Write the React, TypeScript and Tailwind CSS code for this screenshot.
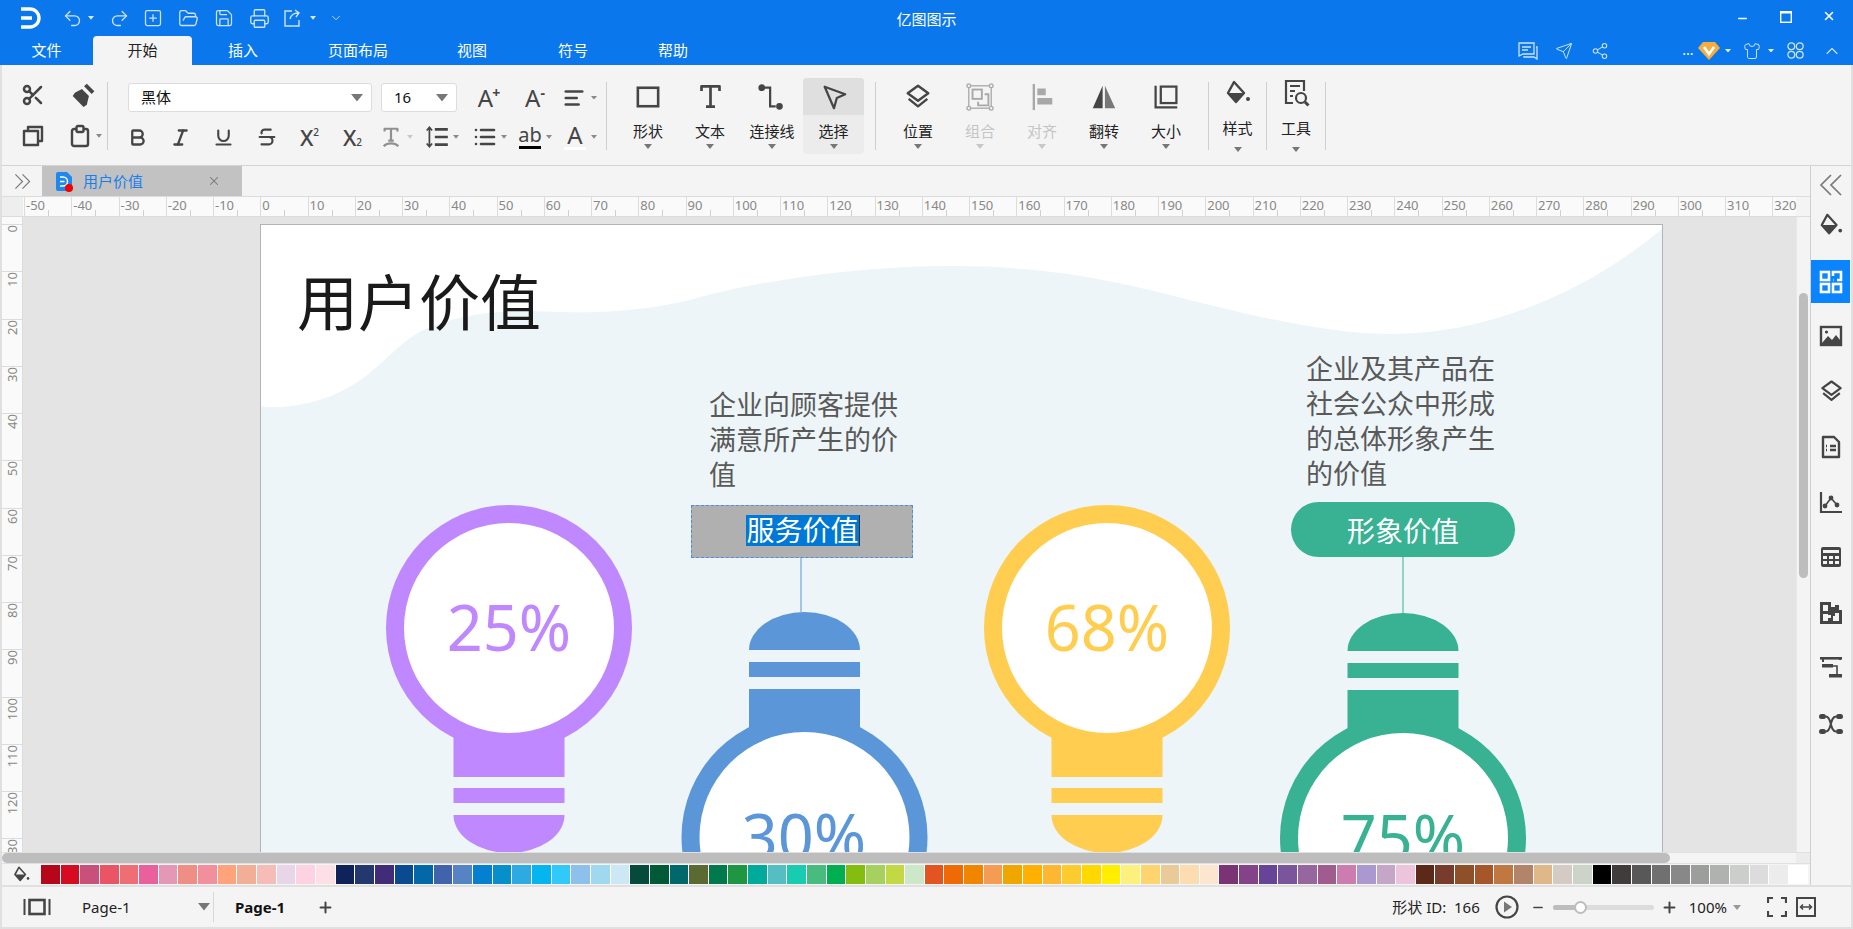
import React from "react";
import {
  Scissors, Bold, Italic, Underline, Strikethrough, List, AlignLeft,
  Undo2, Redo2, SquarePlus, FolderOpen, Save, Printer, Plus, Minus, Shirt, Share2, Send,
  ChevronUp, ChevronDown, X,
} from "lucide-react";

const FONT = "[font-family:'Noto_Sans','Noto_Sans_CJK_SC',sans-serif]";

const Caret = ({ c = "#8a8a8a", w = 8 }: { c?: string; w?: number }) => (
  <svg width={w} height={(w * 5) / 8} viewBox="0 0 8 5"><path d="M0 0h8L4 5z" fill={c} /></svg>
);

const I = ({ size = 24, children, sw = 2, className = "" }: { size?: number; children: React.ReactNode; sw?: number; className?: string }) => (
  <svg width={size} height={size} viewBox="0 0 24 24" fill="none" stroke="currentColor" strokeWidth={sw} strokeLinejoin="round" className={className}>{children}</svg>
);

const Brush = () => (
  <svg width="26" height="26" viewBox="0 0 24 24"><path d="M15.5 1.5l7 7-2.5 2.5-7-7z" fill="currentColor" /><path d="M11 6.5l6.5 6.5-2 8-3 2-10-10 2-3z" fill="currentColor" /></svg>
);
const CopyI = () => (
  <I size={24} sw={2.4}><rect x="3" y="7" width="14" height="14" /><path d="M7 7V3h14v14h-4" /></I>
);
const Paste = () => (
  <I size={24} sw={2.4}><rect x="4" y="5" width="16" height="17" rx="2" /><rect x="8.5" y="2" width="7" height="6" rx="1.5" fill="#f4f4f4" /></I>
);
const TStyle = () => (
  <I size={22} sw={2.4}><path d="M5 6V3h14v3M12 3v13M9 16h6" /><path d="M4 22c4-4 12-4 16 0" /></I>
);
const LineSp = () => (
  <svg width="26" height="26" viewBox="0 0 24 24" fill="none" stroke="currentColor"><path d="M10 5h12M10 12h12M10 19h12" strokeWidth="2.4" /><path d="M5 3v18M2.5 6L5 3l2.5 3M2.5 18L5 21l2.5-3" strokeWidth="1.6" /></svg>
);
const TextT = () => (
  <I size={27} sw={2.4}><path d="M4 7V3h16v4M12 3v18M8 21h8" /></I>
);
const Connector = () => (
  <svg width="28" height="28" viewBox="0 0 30 30" fill="none" stroke="currentColor" strokeWidth="2.4"><circle cx="4" cy="5" r="2.4" fill="currentColor" /><path d="M7 5h6v20h6" /><circle cx="23" cy="25" r="2.4" fill="currentColor" /></svg>
);
const Pointer = () => (
  <svg width="28" height="28" viewBox="0 0 30 30" fill="none" stroke="currentColor" strokeWidth="2.4" strokeLinejoin="round"><path d="M5 4l22 8-9 4-3 11z" /></svg>
);
const LayersI = ({ size = 28 }: { size?: number }) => (
  <svg width={size} height={size} viewBox="0 0 30 30" fill="none" stroke="currentColor" strokeWidth="2.6" strokeLinejoin="round"><path d="M15 3l11 8-11 8-11-8z" /><path d="M5 17l10 8 10-8" /></svg>
);
const GroupI = () => (
  <svg width="28" height="28" viewBox="0 0 30 30" fill="none" stroke="currentColor" strokeWidth="1.4"><rect x="3" y="3" width="24" height="24" /><rect x="7" y="7" width="10" height="10" strokeWidth="2" /><path d="M20 12h4v12H13v-4" strokeWidth="2" /><g fill="#f4f4f4"><circle cx="3" cy="3" r="2" /><circle cx="27" cy="3" r="2" /><circle cx="3" cy="27" r="2" /><circle cx="27" cy="27" r="2" /></g></svg>
);
const AlignI = () => (
  <svg width="28" height="28" viewBox="0 0 30 30" fill="currentColor"><path d="M5 1h2.5v28H5z" /><path d="M10 6h9v7h-9zM10 16h16v7H10z" /></svg>
);
const FlipI = () => (
  <svg width="28" height="28" viewBox="0 0 30 30"><path d="M13.5 3v24H3z" fill="#454545" /><path d="M16 3v24h11z" fill="#787878" /></svg>
);
const SizeI = () => (
  <svg width="26" height="26" viewBox="0 0 30 30" fill="none" stroke="currentColor" strokeWidth="2.6"><rect x="9" y="3" width="18" height="19" /><path d="M3 2v25h25" /></svg>
);
const Bucket = ({ size = 26 }: { size?: number }) => (
  <svg width={size} height={size} viewBox="0 0 26 26"><path d="M9 2l10 11-8 9-8-9z" fill="none" stroke="currentColor" strokeWidth="2.4" strokeLinejoin="round" /><path d="M3 13h16l-8 9z" fill="currentColor" /><circle cx="23" cy="19" r="2" fill="currentColor" /></svg>
);
const ToolI = () => (
  <svg width="28" height="30" viewBox="0 0 28 30" fill="none" stroke="currentColor" strokeWidth="2.2"><path d="M11 25H4V3h18v10" /><path d="M8 8h10M8 13h5M8 18h3" /><circle cx="19" cy="20" r="5" /><path d="M23 24l3.5 3.5" strokeWidth="3" /></svg>
);
const GridI = () => (
  <svg width="24" height="24" viewBox="0 0 24 24" fill="none" stroke="currentColor" strokeWidth="2.6"><rect x="2" y="2" width="8" height="8" /><path d="M14 6V2h8v8h-4" /><path d="M14 10h.5" /><rect x="2" y="14" width="8" height="8" /><rect x="14" y="14" width="8" height="8" /></svg>
);
const ImageI = () => (
  <svg width="24" height="24" viewBox="0 0 24 24"><rect x="2" y="3" width="20" height="18" fill="none" stroke="currentColor" strokeWidth="2.4" /><path d="M3 19l6-7 4 4 4-5 4 5v4H3z" fill="currentColor" /><circle cx="7.5" cy="8" r="1.6" fill="currentColor" /></svg>
);
const DocI = () => (
  <svg width="24" height="24" viewBox="0 0 24 24" fill="none" stroke="currentColor" strokeWidth="2.4" strokeLinejoin="round"><path d="M4 2h11l5 5v15H4z" /><path d="M7 11h1M11 11h6M7 15h1M11 15h6" /></svg>
);
const ChartI = () => (
  <svg width="24" height="24" viewBox="0 0 24 24" fill="none" stroke="currentColor" strokeWidth="2.2"><path d="M2 2v20h21" /><path d="M6 16l6-8 6 7" strokeWidth="1.6" /><g fill="currentColor" stroke="none"><circle cx="6" cy="16" r="2.4" /><circle cx="12" cy="8" r="2.4" /><circle cx="18" cy="15" r="2.4" /></g></svg>
);
const TableI = () => (
  <svg width="24" height="24" viewBox="0 0 24 24"><path fillRule="evenodd" d="M4 2h16a2 2 0 012 2v16a2 2 0 01-2 2H4a2 2 0 01-2-2V4a2 2 0 012-2zM4 5v3h16V5zM4 11v3h4v-3zm6 0v3h4v-3zm6 0v3h4v-3zM4 16v3h4v-3zm6 0v3h4v-3zm6 0v3h4v-3z" fill="currentColor" /></svg>
);
const PuzzleI = () => (
  <svg width="24" height="24" viewBox="0 0 24 24"><path fillRule="evenodd" d="M1 1h11v5h4V4h4v5h3v14H1zM4 4v6h5V4zM4 13v7h5v-3h3v-3H9v-1zm12-1v3h-2v5h6v-8z" fill="currentColor" /></svg>
);
const TreeI = () => (
  <svg width="24" height="24" viewBox="0 0 24 24"><path d="M1 1h22v2.6H1z" fill="currentColor" /><path d="M3 1h2v5H3zM20 1h2v3h-2z" fill="currentColor" /><path d="M3 8h11v3.4H3zM10 18h13v3.4H10z" fill="currentColor" /><path d="M14 10h4v9" fill="none" stroke="currentColor" strokeWidth="1.6" /></svg>
);
const MindI = () => (
  <svg width="24" height="24" viewBox="0 0 24 24"><g fill="currentColor"><rect x="0" y="2" width="7" height="5" rx="2.5" /><rect x="17" y="2" width="7" height="5" rx="2.5" /><rect x="0" y="17" width="7" height="5" rx="2.5" /><rect x="17" y="17" width="7" height="5" rx="2.5" /></g><path d="M7 4.5c6 0 3.5 15 10 15M17 4.5c-6.500 0-4 15-10 15" fill="none" stroke="currentColor" strokeWidth="2" /></svg>
);
const FileLogo = () => (
  <svg width="16" height="19" viewBox="0 0 16 19"><path d="M2 0h9l5 5v12a2 2 0 01-2 2H2a2 2 0 01-2-2V2a2 2 0 012-2z" fill="#1e88f0" /><path d="M4 5h3a4.5 4.5 0 010 9H4M4 9.500h4.500" fill="none" stroke="#fff" strokeWidth="1.5" /></svg>
);
const DoubleChev = ({ size, dir }: { size: number; dir: "l" | "r" }) => (
  <svg width={size} height={size} viewBox="0 0 24 24" fill="none" stroke="currentColor" strokeWidth="1.7">
    {dir === "l" ? <path d="M12 2L2 12l10 10M22 2L12 12l10 10" /> : <path d="M2 2l10 10L2 22M12 2l10 10-10 10" />}
  </svg>
);

const Big = ({ label, icon, disabled = false, active = false, tight = false, w = "w-[62px]" }: { label: string; icon: React.ReactNode; disabled?: boolean; active?: boolean; tight?: boolean; w?: string }) => (
  <div className={`${w} h-[76px] mt-[13px] flex flex-col items-center rounded-sm ${active ? "bg-[#ececec]" : ""}`}>
    <div className={`h-[37px] w-full flex items-center justify-center rounded-t-sm ${tight ? "pb-[8px]" : ""} ${active ? "bg-[#dfdfdf]" : ""} ${disabled ? "text-[#a8a8a8]" : "text-[#454545]"}`}>{icon}</div>
    <div className={`text-[15px] leading-[20px] ${tight ? "mt-[3px]" : "mt-[6px]"} ${disabled ? "text-[#c4c4c4]" : "text-[#222]"}`}>{label}</div>
    <div className={`${tight ? "mt-[9px]" : "mt-[3px]"} flex`}><Caret c={disabled ? "#c8c8c8" : "#777"} /></div>
  </div>
);

const VDiv = () => <div className="w-px h-[68px] mt-[17px] bg-[#cfcfcf] shrink-0" />;

const Cell = ({ w, children, className = "" }: { w: string; children?: React.ReactNode; className?: string }) => (
  <div className={`${w} shrink-0 flex items-center justify-center ${className}`}>{children}</div>
);

const RULER_H = Array.from({ length: 38 }, (_, i) => -50 + i * 10);
const RULER_V = Array.from({ length: 14 }, (_, i) => i * 10);

const SWATCHES = [
  "#b5061a","#d60b20","#c8507a","#ea5565","#ee6e73","#e8609c","#e597b6","#ef8e85","#f18f9c","#ffa47a","#f2ae96","#f6bcb8","#e8d5e8","#fdd3e4","#fde0e6",
  "#10225a","#22386e","#412c7a","#0a4a90","#0468a8","#4063ac","#5583c4","#0580d0","#078fcc","#2eaae2","#05b5f0","#30c9fa","#8bc1ea","#a0d8ef","#cce8f4",
  "#054a3a","#005a38","#00686a","#5a6a30","#007a4c","#1f9642","#00ab9c","#54bec2","#18ccb2","#48bb7e","#00b050","#84bc10","#a6d060","#c2d944","#cde8c8",
  "#e45420","#ee6a05","#f28500","#f49c54","#f0a600","#ffb000","#ffb732","#fccc2e","#ffd800","#ffee00","#fdf17e","#fed46e","#eacb98","#fddcb0","#fce6d0",
  "#7a3474","#844288","#684498","#7a559c","#96669e","#a05c8e","#cc7cae","#ab98d0","#c6a6c8","#ecc4dc",
  "#5c2818","#783c2c","#8e5028","#a65628","#c07840","#b28468","#deb888","#d4ccc4","#ccd4ca",
  "#000000","#403c3c","#585858","#707070","#888888","#9c9e9c","#b0b2b0","#cccecc","#dcdcdc","#ececec","#ffffff",
];

const PURPLE = "#c088fe";
const BLUE = "#5a96d8";
const YELLOW = "#ffcd50";
const GREEN = "#38b292";

const BulbDown = ({ cx, color }: { cx: number; color: string }) => (
  <g fill={color}>
    <circle cx={cx} cy={628} r={123} />
    <rect x={cx - 55.5} y={720} width={111} height={57} />
    <rect x={cx - 55.5} y={788} width={111} height={15} />
    <path d={`M${cx - 55.5} 815H${cx + 55.5}A55.5 38 0 0 1 ${cx - 55.5} 815z`} />
    <circle cx={cx} cy={628} r={105} fill="#fff" />
  </g>
);
const BulbUp = ({ cx, color, dy = 0 }: { cx: number; color: string; dy?: number }) => (
  <g fill={color} transform={`translate(0 ${dy})`}>
    <path d={`M${cx - 55.5} 650H${cx + 55.5}A55.5 38 0 0 0 ${cx - 55.5} 650z`} />
    <rect x={cx - 55.5} y={662} width={111} height={15} />
    <rect x={cx - 55.5} y={689} width={111} height={60} />
    <circle cx={cx} cy={837} r={123} />
    <circle cx={cx} cy={837} r={105} fill="#fff" />
  </g>
);

export default function App() {
  return (
    <div className={`w-[1853px] h-[929px] flex flex-col overflow-hidden bg-[#f4f4f4] ${FONT}`}>
      {/* Title + tabs */}
      <header className="h-[65px] shrink-0 bg-[#0a78ec] text-white flex flex-col relative">
        <div className="h-[36px] flex items-center pl-[12px] text-[#cfe2fb]">
          <Cell w="w-[36px]">
            <svg width="22" height="24" viewBox="0 0 22 24" fill="none" stroke="#fff" strokeWidth="3.4"><path d="M2 3h9a9 9 0 010 18H2M2 12h11" /></svg>
          </Cell>
          <Cell w="w-[32px]" className="ml-[8px]"><Undo2 size={21} strokeWidth={1.5} /></Cell>
          <Cell w="w-[6px]"><Caret c="#dbe9fb" w={6} /></Cell>
          <Cell w="w-[34px]" className="ml-[8px]"><Redo2 size={21} strokeWidth={1.5} /></Cell>
          <Cell w="w-[34px]"><SquarePlus size={20} strokeWidth={1.5} /></Cell>
          <Cell w="w-[36px]"><FolderOpen size={21} strokeWidth={1.5} /></Cell>
          <Cell w="w-[36px]"><Save size={20} strokeWidth={1.5} /></Cell>
          <Cell w="w-[34px]"><Printer size={21} strokeWidth={1.5} /></Cell>
          <Cell w="w-[34px]">
            <svg width="20" height="20" viewBox="0 0 20 20" fill="none" stroke="currentColor" strokeWidth="1.4"><path d="M9 3H2v15h14v-6M7 11c1-4 4-6 8-6M12 2l4 3-3 4" /></svg>
          </Cell>
          <Cell w="w-[6px]"><Caret c="#dbe9fb" w={6} /></Cell>
          <Cell w="w-[34px]" className="ml-[3px]"><ChevronDown size={14} strokeWidth={1.5} /></Cell>
          <div className="ml-auto flex items-center pr-[3px] text-white">
            <Cell w="w-[43px]"><Minus size={13} strokeWidth={2.6} /></Cell>
            <Cell w="w-[43px]" className="pb-[3px]"><svg width="12" height="12" viewBox="0 0 12 12" fill="none" stroke="#fff" strokeWidth="1.4"><rect x=".7" y=".7" width="10.6" height="10.6" /><path d="M0 1.5h12" strokeWidth="2" /></svg></Cell>
            <Cell w="w-[43px]" className="pb-[5px]"><X size={14} strokeWidth={2.6} /></Cell>
          </div>
        </div>
        <div className="absolute left-1/2 -translate-x-1/2 top-[9px] text-[15px] leading-[20px]">亿图图示</div>
        <div className="h-[29px] flex items-stretch text-[15px]">
          <div className="w-[93px] flex items-center justify-center">文件</div>
          <div className="w-[99px] flex items-center justify-center bg-[#f4f4f4] text-[#222] rounded-t-sm">开始</div>
          <div className="w-[102px] flex items-center justify-center">插入</div>
          <div className="w-[128px] flex items-center justify-center">页面布局</div>
          <div className="w-[100px] flex items-center justify-center">视图</div>
          <div className="w-[102px] flex items-center justify-center">符号</div>
          <div className="w-[98px] flex items-center justify-center">帮助</div>
          <div className="ml-auto flex items-center pr-[6px] text-[#cfe2fb]">
            <Cell w="w-[36px]"><svg width="20" height="18" viewBox="0 0 20 18" fill="none" stroke="currentColor" strokeWidth="1.3"><path d="M1 1h15v11H5l-4 2zM18 5h1v12l-3-2H6v-1" /><path d="M4 5h9M4 8h6" /></svg></Cell>
            <Cell w="w-[36px]"><Send size={18} strokeWidth={1.3} /></Cell>
            <Cell w="w-[36px]"><Share2 size={18} strokeWidth={1.4} /></Cell>
            <Cell w="w-[20px]" className="ml-[60px] text-white text-[14px] leading-none pb-[2px]">...</Cell>
            <Cell w="w-[22px]"><svg width="22" height="20" viewBox="0 0 22 20"><path d="M5 1h12l5 6-11 12L0 7z" fill="#f6ae3e" /><path d="M6 6l5 7 5-7" fill="none" stroke="#fff" strokeWidth="2.6" /></svg></Cell>
            <Cell w="w-[12px]" className="ml-[2px]"><Caret c="#dbe9fb" w={6} /></Cell>
            <Cell w="w-[28px]" className="ml-[4px]"><Shirt size={18} strokeWidth={1.3} /></Cell>
            <Cell w="w-[10px]"><Caret c="#dbe9fb" w={6} /></Cell>
            <Cell w="w-[30px]" className="ml-[4px]"><svg width="17" height="17" viewBox="0 0 17 17" fill="none" stroke="currentColor" strokeWidth="1.3"><circle cx="4.3" cy="4.3" r="3.4" /><circle cx="12.7" cy="4.3" r="3.4" /><circle cx="4.3" cy="12.7" r="3.4" /><circle cx="12.7" cy="12.7" r="3.4" /></svg></Cell>
            <Cell w="w-[30px]" className="ml-[7px]"><ChevronUp size={20} strokeWidth={1.3} /></Cell>
          </div>
        </div>
      </header>

      <div className="flex-1 min-h-0 flex flex-col border-x-2 border-b-2 border-[#e0e0e0]">
        {/* Ribbon */}
        <div className="h-[101px] shrink-0 border-b border-[#d4d4d4] flex text-[#454545]">
          <div className="w-[105px] shrink-0 pl-[6px]">
            <div className="h-[32px] mt-[14px] flex items-center">
              <Cell w="w-[50px]"><Scissors size={24} strokeWidth={2.5} /></Cell>
              <Cell w="w-[50px]"><Brush /></Cell>
            </div>
            <div className="h-[32px] mt-[9px] flex items-center">
              <Cell w="w-[50px]"><CopyI /></Cell>
              <Cell w="w-[32px]" className="ml-[6px]"><Paste /></Cell>
              <Cell w="w-[6px]"><Caret w={6} /></Cell>
            </div>
          </div>
          <VDiv />
          <div className="w-[498px] shrink-0">
            <div className="h-[29px] mt-[18px] flex items-center pl-[20px]">
              <div className="w-[244px] h-[29px] shrink-0 bg-white border border-[#dcdcdc] rounded-[3px] flex items-center pl-[12px] pr-[8px] text-[15px] text-[#111]">
                <span className="flex-1">黑体</span><Caret c="#777" w={12} />
              </div>
              <div className="w-[76px] h-[29px] shrink-0 ml-[9px] bg-white border border-[#dcdcdc] rounded-[3px] flex items-center pl-[12px] pr-[8px] text-[15px] text-[#111]">
                <span className="flex-1">16</span><Caret c="#777" w={12} />
              </div>
              <Cell w="w-[36px]" className="ml-[14px] text-[24px] leading-none"><span>A</span><span className="text-[14px] font-bold mb-[10px] -ml-[1px]">+</span></Cell>
              <Cell w="w-[36px]" className="ml-[10px] text-[24px] leading-none"><span>A</span><span className="text-[14px] font-bold mb-[10px]">-</span></Cell>
              <Cell w="w-[32px]" className="ml-[5px]"><AlignLeft size={22} strokeWidth={2.8} /></Cell>
              <Cell w="w-[8px]"><Caret w={6} /></Cell>
            </div>
            <div className="h-[32px] mt-[9px] flex items-center pl-[8px]">
              <Cell w="w-[43px]"><Bold size={21} strokeWidth={2.6} /></Cell>
              <Cell w="w-[43px]"><Italic size={21} strokeWidth={2.6} /></Cell>
              <Cell w="w-[43px]"><Underline size={21} strokeWidth={2.4} /></Cell>
              <Cell w="w-[43px]"><Strikethrough size={22} strokeWidth={2.4} /></Cell>
              <Cell w="w-[43px]" className="text-[22px] leading-none font-medium"><span>X</span><span className="text-[10px] mb-[10px]">2</span></Cell>
              <Cell w="w-[43px]" className="text-[22px] leading-none font-medium"><span>X</span><span className="text-[10px] mt-[10px]">2</span></Cell>
              <Cell w="w-[32px]" className="ml-[1px] text-[#909090]"><TStyle /></Cell>
              <Cell w="w-[6px]"><Caret c="#c8c8c8" w={6} /></Cell>
              <Cell w="w-[32px]" className="ml-[8px]"><LineSp /></Cell>
              <Cell w="w-[6px]"><Caret w={6} /></Cell>
              <Cell w="w-[32px]" className="ml-[10px]"><List size={24} strokeWidth={2.6} /></Cell>
              <Cell w="w-[6px]"><Caret w={6} /></Cell>
              <Cell w="w-[32px]" className="ml-[7px] flex-col text-[20px] leading-[20px]"><span>ab</span><span className="w-[22px] h-[3px] bg-black mt-[1px]" /></Cell>
              <Cell w="w-[6px]"><Caret w={6} /></Cell>
              <Cell w="w-[32px]" className="ml-[7px] flex-col text-[24px] leading-[22px]"><span>A</span><span className="w-[22px] h-[3px] bg-white mt-[1px]" /></Cell>
              <Cell w="w-[6px]"><Caret w={6} /></Cell>
            </div>
          </div>
          <VDiv />
          <div className="w-[10px] shrink-0" />
          <Big label="形状" icon={<svg width="24" height="24" viewBox="0 0 26 26" fill="none" stroke="currentColor" strokeWidth="2.8"><rect x="2" y="3" width="22" height="20" /></svg>} />
          <Big label="文本" icon={<TextT />} />
          <Big label="连接线" icon={<Connector />} />
          <Big label="选择" active w="w-[61px]" icon={<Pointer />} />
          <div className="w-[11px] shrink-0" />
          <VDiv />
          <div className="w-[11px] shrink-0" />
          <Big label="位置" icon={<LayersI />} />
          <Big label="组合" disabled icon={<GroupI />} />
          <Big label="对齐" disabled icon={<AlignI />} />
          <Big label="翻转" icon={<FlipI />} />
          <Big label="大小" icon={<SizeI />} />
          <div className="w-[11px] shrink-0" />
          <VDiv />
          <Big label="样式" tight w="w-[57px]" icon={<Bucket />} />
          <VDiv />
          <Big label="工具" tight w="w-[58px]" icon={<ToolI />} />
          <VDiv />
        </div>

        {/* Middle */}
        <div className="flex-1 min-h-0 flex">
          <div className="flex-1 min-w-0 flex flex-col">
            {/* doc tabs */}
            <div className="h-[30px] shrink-0 flex items-stretch">
              <Cell w="w-[40px]" className="text-[#7a7a7a]"><DoubleChev size={17} dir="r" /></Cell>
              <div className="w-[200px] bg-[#c2c2c2] flex items-center pl-[14px] relative">
                <FileLogo />
                <span className="absolute left-[23px] top-[18px] w-[8px] h-[8px] rounded-full bg-[#f00000]" />
                <span className="ml-[11px] text-[15px] text-[#1a7fe8]">用户价值</span>
                <span className="ml-auto mr-[21px] text-[#777]"><X size={14} strokeWidth={1.8} /></span>
              </div>
            </div>
            {/* h ruler */}
            <div className="h-[21px] shrink-0 flex border-y border-[#dcdcdc]">
              <div className="w-[21px] shrink-0 bg-[#eeeeee]" />
              <div className="flex-1 min-w-0 flex overflow-hidden bg-[#fafafa] pl-px">
                {RULER_H.map((n) => (
                  <div key={n} className="w-[47.25px] shrink-0 relative border-l border-[#dcdcdc] pl-[1px] text-[13px] leading-[17px] text-[#888] overflow-hidden">
                    {n}
                    <span className="absolute left-1/2 bottom-0 w-px h-[6px] bg-[#d0d0d0]" />
                  </div>
                ))}
              </div>
              <div className="w-[14px] shrink-0" />
            </div>
            {/* canvas row */}
            <div className="flex-1 min-h-0 flex">
              <div className="w-[21px] shrink-0 bg-[#fafafa] overflow-hidden pt-[7px] border-r border-[#dcdcdc]">
                {RULER_V.map((n) => (
                  <div key={n} className="h-[47.25px] border-t border-[#dcdcdc] flex items-start justify-center">
                    <span className="[writing-mode:vertical-rl] rotate-180 text-[13px] leading-[16px] text-[#888]">{n}</span>
                  </div>
                ))}
              </div>
              <div className="flex-1 min-w-0 bg-[#e4e4e4] overflow-hidden pt-[7px] pl-[237px]">
                <div className="relative w-[1403px] h-[640px] border border-[#b0b4b4] bg-[#edf5f8] overflow-hidden">
                  <svg className="absolute left-[-1px] top-[-1px]" width="1403" height="640" viewBox="260 224 1403 640">
                    <path d="M260 224H1663V228C1600 282 1500 334 1390 334C1300 334 1180 295 1118 283C1060 270 1000 266 950 266C860 266 760 280 690 300C640 312 590 313 562 312C520 310 470 310 428 328C385 345 370 400 281 407C272 407 265 407 260 406Z" fill="#fff" />
                    <BulbDown cx={509} color={PURPLE} />
                    <BulbDown cx={1107} color={YELLOW} />
                    <path d="M801 558V612" stroke={BLUE} strokeWidth="1" />
                    <BulbUp cx={804.5} color={BLUE} />
                    <path d="M1403 557V613" stroke={GREEN} strokeWidth="1" />
                    <BulbUp cx={1403} color={GREEN} dy={1} />
                  </svg>
                  <div className="absolute left-[36px] top-[48px] text-[61px] leading-[60px] text-[#1a1a1a] whitespace-nowrap">用户价值</div>

                  <div className="absolute left-[128px] top-[371px] w-[240px] text-center text-[63px] leading-[62px] text-[#c088fe] [font-family:'Noto_Sans',sans-serif]">25%</div>
                  <div className="absolute left-[726px] top-[371px] w-[240px] text-center text-[63px] leading-[62px] text-[#ffcd50] [font-family:'Noto_Sans',sans-serif]">68%</div>
                  <div className="absolute left-[423px] top-[580px] w-[240px] text-center text-[63px] leading-[62px] text-[#5a96d8] [font-family:'Noto_Sans',sans-serif]">30%</div>
                  <div className="absolute left-[1022px] top-[581px] w-[240px] text-center text-[63px] leading-[62px] text-[#38b292] [font-family:'Noto_Sans',sans-serif]">75%</div>

                  <div className="absolute left-[448px] top-[162px] w-[190px] text-[27px] leading-[35px] text-[#595959]">企业向顾客提供满意所产生的价值</div>
                  <div className="absolute left-[1045px] top-[126px] w-[190px] text-[27px] leading-[35px] text-[#595959]">企业及其产品在社会公众中形成的总体形象产生的价值</div>

                  <div className="absolute left-[430px] top-[280px] w-[222px] h-[53px] bg-[#b0b0b0] border border-dashed border-[#4a90e2] flex items-center justify-center text-[28px] leading-[31px] text-white">
                    <span className="bg-[#0078d7] h-[31px] mb-[2px] ml-[2px]">服务价值</span>
                    <span className="w-px h-[31px] mb-[2px] bg-[#333]" />
                  </div>
                  <div className="absolute left-[1030px] top-[277px] w-[224px] h-[55px] rounded-full bg-[#38b292] flex items-center justify-center text-[28px] text-white pt-[2px]">形象价值</div>
                </div>
              </div>
              <div className="w-[14px] shrink-0 border-l border-[#e8e8e8] px-[2px] pt-[76px]">
                <div className="h-[285px] rounded-full bg-[#bdbdbd]" />
              </div>
            </div>
            {/* h scroll */}
            <div className="h-[12px] shrink-0 flex border-y border-[#e0e0e0]">
              <div className="w-[1794px] shrink-0">
                <div className="w-[1668px] h-full rounded-full bg-[#bdbdbd]" />
              </div>
              <div className="flex-1 bg-[#ececec]" />
            </div>
            {/* palette */}
            <div className="h-[21px] shrink-0 flex items-center">
              <Cell w="w-[39px]" className="text-[#454545]"><Bucket size={17} /></Cell>
              <div className="w-[1767px] h-[19px] shrink-0 flex gap-px bg-white">
                {SWATCHES.map((c, i) => (
                  <div key={i} className="flex-1" style={{ backgroundColor: c }} />
                ))}
              </div>
            </div>
          </div>

          {/* Right panel */}
          <aside className="w-[41px] shrink-0 border-l border-[#cfcfcf] flex flex-col items-stretch text-[#454545]">
            <div className="h-[38px] flex items-center justify-center text-[#7a7a7a]"><DoubleChev size={24} dir="l" /></div>
            <div className="h-[41px] flex items-center justify-center"><Bucket size={24} /></div>
            <div className="h-[15px]" />
            <div className="h-[43px] bg-[#0a84ff] text-white flex items-center justify-center mr-[1px]"><GridI /></div>
            <div className="h-[55px] mt-[5px] flex items-center justify-center"><ImageI /></div>
            <div className="h-[55px] mt-[1px] flex items-center justify-center"><LayersI size={25} /></div>
            <div className="h-[55px] flex items-center justify-center"><DocI /></div>
            <div className="h-[55px] flex items-center justify-center"><ChartI /></div>
            <div className="h-[55px] flex items-center justify-center"><TableI /></div>
            <div className="h-[55px] mt-[1px] flex items-center justify-center"><PuzzleI /></div>
            <div className="h-[55px] flex items-center justify-center"><TreeI /></div>
            <div className="h-[55px] mt-[1px] flex items-center justify-center"><MindI /></div>
          </aside>
        </div>

        {/* Status bar */}
        <div className="h-[42px] shrink-0 border-t-2 border-[#e0e0e0] flex items-center text-[15px] text-[#222]">
          <Cell w="w-[30px]" className="ml-[20px] text-[#454545]">
            <svg width="28" height="18" viewBox="0 0 28 18" fill="none" stroke="currentColor"><rect x="6.5" y="2" width="15" height="14" strokeWidth="2.6" /><path d="M1.5 1v16M26.5 1v16" strokeWidth="2" /></svg>
          </Cell>
          <span className="ml-[30px] w-[116px]">Page-1</span>
          <Caret c="#777" w={12} />
          <div className="w-px h-[30px] bg-[#d8d8d8] ml-[3px]" />
          <span className="ml-[21px] font-bold text-[#111]">Page-1</span>
          <Plus size={17} strokeWidth={2.8} className="ml-[32px] text-[#454545]" />
          <div className="ml-auto flex items-center pr-[33px]">
            <span className="whitespace-pre">形状 ID:  166</span>
            <svg className="ml-[15px]" width="24" height="24" viewBox="0 0 24 24"><circle cx="12" cy="12" r="10.5" fill="none" stroke="#454545" strokeWidth="2.2" /><path d="M9 6.5l8 5.5-8 5.5z" fill="#777" /></svg>
            <Cell w="w-[14px]" className="ml-[12px] text-[#454545]"><Minus size={17} strokeWidth={2.8} /></Cell>
            <div className="ml-[8px] w-[101px] h-[5px] rounded-full bg-[#dcdcdc] relative">
              <div className="w-[27px] h-full rounded-full bg-[#bdbdbd]" />
              <span className="absolute left-[21px] top-[-4px] w-[13px] h-[13px] rounded-full bg-white border-2 border-[#bdbdbd]" />
            </div>
            <Cell w="w-[18px]" className="ml-[7px] text-[#454545]"><Plus size={17} strokeWidth={2.8} /></Cell>
            <span className="ml-[10px]">100%</span>
            <span className="ml-[6px] flex"><Caret c="#999" w={8} /></span>
            <Cell w="w-[24px]" className="ml-[24px] text-[#454545]">
              <svg width="20" height="20" viewBox="0 0 20 20" fill="none" stroke="currentColor" strokeWidth="2.2"><path d="M1 6V1h5M14 1h5v5M19 14v5h-5M6 19H1v-5" /></svg>
            </Cell>
            <Cell w="w-[24px]" className="ml-[5px] text-[#454545]">
              <svg width="20" height="20" viewBox="0 0 20 20" fill="none" stroke="currentColor"><rect x="1" y="1" width="18" height="18" strokeWidth="2" /><path d="M4.5 10h11M7 7.5L4.5 10 7 12.5M13 7.5l2.5 2.5-2.5 2.5" strokeWidth="1.5" /></svg>
            </Cell>
          </div>
        </div>
      </div>
    </div>
  );
}
